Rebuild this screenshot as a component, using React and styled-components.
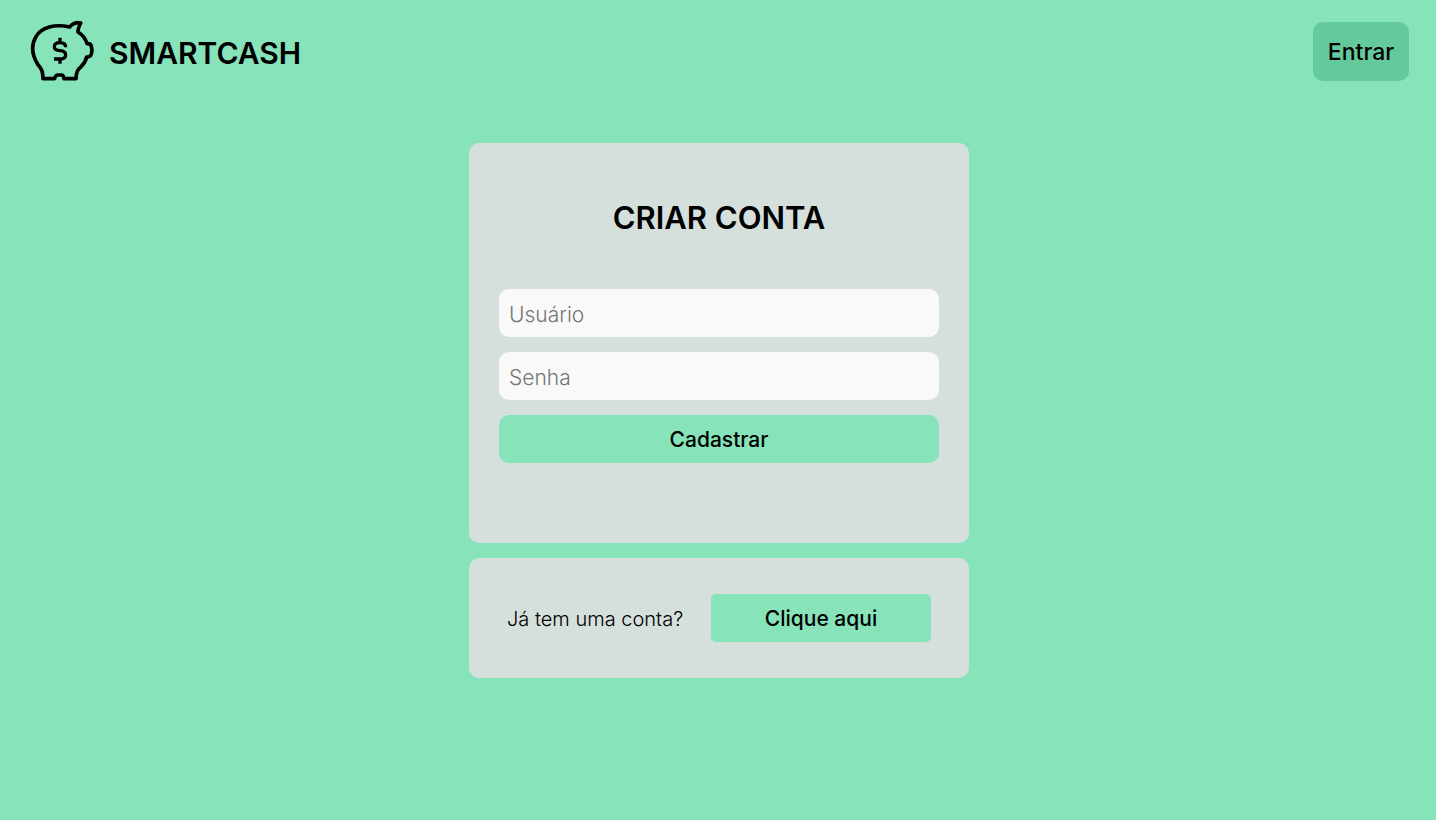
import React from "react";
import styled, { createGlobalStyle } from "styled-components";

const GlobalStyle = createGlobalStyle`
  *, *::before, *::after { box-sizing: border-box; }
  body {
    margin: 0;
    background: #86e3ba;
    color: #000;
    font-family: Inter, "Open Sans", sans-serif;
  }
  button, input { font-family: inherit; }
`;

const Header = styled.header`
  display: flex;
  align-items: center;
  justify-content: space-between;
  padding: 20px 27px 20px 30px;
`;

const Brand = styled.a`
  display: flex;
  align-items: center;
  gap: 14px;
  color: inherit;
  text-decoration: none;
  font-size: 30px;
  font-weight: 600;
  line-height: 40px;
`;

const BrandName = styled.span`
  padding-top: 4px;
`;

const Logo = styled.svg`
  display: block;
  width: 65px;
  height: 62px;
  fill: none;
  stroke: #000;
`;

const Button = styled.button`
  border: 0;
  color: #000;
  cursor: pointer;
  background: #86e3ba;
  border-radius: ${(p) => p.$radius || 10}px;
  width: ${(p) => p.$width || "100%"};
  height: 48px;
  padding: 2px 0 0;
  font-size: 21px;
  font-weight: 500;
  line-height: 28px;
`;

const LoginButton = styled(Button)`
  width: 96px;
  height: 59px;
  background: #65c99e;
  font-size: 23px;
`;

const Main = styled.main`
  display: flex;
  flex-direction: column;
  align-items: center;
  gap: 15px;
  padding: 41px 0 40px 2px;
`;

const Card = styled.section`
  width: 100%;
  max-width: 500px;
  border-radius: 10px;
  background: #d5dfdb;
`;

const SignUpCard = styled(Card)`
  padding: 52px 30px 80px;
`;

const Title = styled.h1`
  margin: 0 0 48px;
  text-align: center;
  font-size: 31px;
  font-weight: 600;
  line-height: 46px;
`;

const Form = styled.form`
  display: flex;
  flex-direction: column;
  gap: 15px;
`;

const Field = styled.input`
  width: 100%;
  height: 48px;
  padding: 2px 10px 0;
  border: 0;
  border-radius: 10px;
  background: #f9f9f9;
  color: #000;
  font-size: 21px;
  font-weight: 300;
  &::placeholder { color: #757575; opacity: 1; }
`;

const LoginCard = styled(Card)`
  display: flex;
  align-items: center;
  justify-content: space-between;
  padding: 36px 38px;
`;

const Question = styled.p`
  margin: 0;
  padding-top: 2px;
  font-size: 20px;
  font-weight: 300;
  line-height: 28px;
`;

function PiggyLogo() {
  return (
    <Logo viewBox="30 30 195 186" aria-hidden="true">
      <path
        strokeWidth="11"
        strokeLinejoin="round"
        d="M149 51C104 41 64 52 48 80C32 107 37 137 54 164C66 179 68 182 69 206H104C106 198 108 195 113 195H124C129 195 131 198 132 206H168C169 184 173 179 184 169C193 160 198 150 200 141C209 141 213 137 214 132L216 121L214 109C213 103 208 100 201 101C197 85 187 74 174 66C173 56 177 49 182 39C169 36 158 41 149 51Z"
      />
      <path
        strokeWidth="10"
        d="M120 83V99M120 144V161M137 112C137 103 131 98 120 98C109 98 103 102 103 110C103 118 109 121 120 122C131 123 137 127 137 135C137 143 131 147 120 147H102"
      />
    </Logo>
  );
}

export default function App() {
  return (
    <>
      <GlobalStyle />
      <Header>
        <Brand href="#">
          <PiggyLogo />
          <BrandName>SMARTCASH</BrandName>
        </Brand>
        <LoginButton type="button">Entrar</LoginButton>
      </Header>
      <Main>
        <SignUpCard>
          <Title>CRIAR CONTA</Title>
          <Form onSubmit={(e) => e.preventDefault()}>
            <Field type="text" name="username" placeholder="Usuário" aria-label="Usuário" />
            <Field type="password" name="password" placeholder="Senha" aria-label="Senha" />
            <Button type="submit">Cadastrar</Button>
          </Form>
        </SignUpCard>
        <LoginCard>
          <Question>Já tem uma conta?</Question>
          <Button type="button" $width="220px" $radius={5}>Clique aqui</Button>
        </LoginCard>
      </Main>
    </>
  );
}
